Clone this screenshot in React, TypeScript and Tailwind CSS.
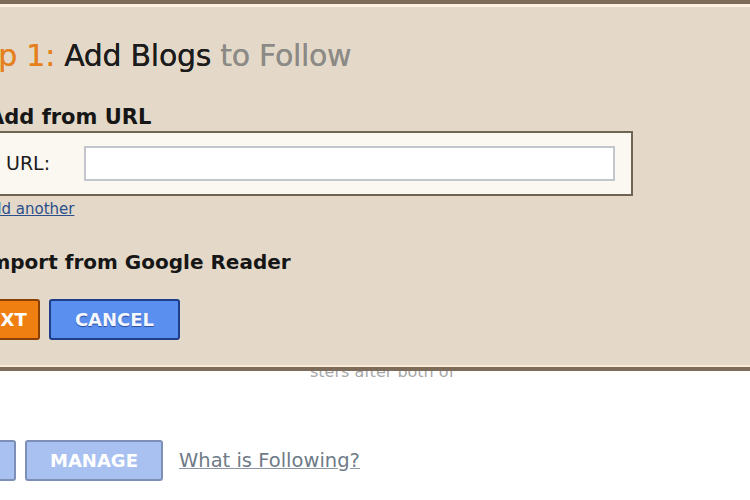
import React from 'react';

const font = { fontFamily: '"DejaVu Sans", Verdana, sans-serif' };

export default function App() {
  return (
    <div className="relative h-[500px] w-[750px] overflow-hidden bg-white" style={font}>
      {/* dialog panel */}
      <div className="flex h-[371px] flex-col border-t-4 border-b-4 border-[#7d6c5a] bg-[#e4d9c8]">
        <div className="h-[3px] bg-[#fbf1de]" />
        <div className="flex flex-1 flex-col">
          <h1 className="-ml-[50px] mt-[30px] text-[30px] leading-[38px] tracking-[-0.3px] text-[#1c1c1c] [text-shadow:0_0_0.6px_#1c1c1c]">
            <span className="text-[#e5801f] [text-shadow:0_0_0.6px_#e5801f]">Step 1:</span> Add Blogs{' '}
            <span className="text-[#8c8a86] [text-shadow:0_0_0.6px_#8c8a86]">to Follow</span>
          </h1>

          <h2 className="-ml-[12px] mt-[29px] text-[21px] font-bold leading-[26px] text-[#161616]">
            Add from URL
          </h2>

          <div className="-ml-[12px] mt-[1px] flex h-[65px] w-[645px] items-center border-2 border-[#6e6454] bg-[#fbf8f1] pl-[16px]">
            <label className="w-[78px] text-[19px] text-[#1c1c1c]">URL:</label>
            <input
              className="h-[35px] w-[531px] border-2 border-[#c3c6cc] bg-white outline-none"
              type="text"
            />
          </div>

          <a className="-ml-[18px] mt-[3px] text-[15px] leading-[20px] text-[#2b4f8c] underline">
            Add another
          </a>

          <h2 className="-ml-[18px] mt-[30px] text-[20px] font-bold leading-[26px] text-[#161616]">
            Import from Google Reader
          </h2>

          <div className="-ml-[40px] mt-[24px] flex gap-[9px]">
            <button className="h-[41px] w-[80px] rounded-[3px] border-2 border-[#8a3f06] bg-[#f07f12] text-[18px] font-bold text-white">
              NEXT
            </button>
            <button className="h-[41px] w-[131px] rounded-[3px] border-2 border-[#1d3e8a] bg-[#5a8ff0] text-[18px] font-bold text-[#f4f7ff] [text-shadow:0_1px_1px_#2a4f9a]">
              CANCEL
            </button>
          </div>
        </div>
        <div className="h-[2px] bg-[#f6ead6]" />
      </div>

      {/* page text peeking under the dialog */}
      <div className="h-[9px] overflow-hidden">
        <p className="-mt-[8px] ml-[310px] text-[16px] leading-[17px] text-[#a8a8a8]">
          sters after both of
        </p>
      </div>

      {/* page buttons */}
      <div className="-ml-[60px] mt-[60px] flex items-center gap-[9px]">
        <button className="h-[41px] w-[76px] rounded-[3px] border-2 border-[#7d8fb6] bg-[#a9c1f1] text-[18px] font-bold text-white">
          ADD
        </button>
        <button className="h-[41px] w-[138px] rounded-[3px] border-2 border-[#7d8fb6] bg-[#a9c1f1] text-[18px] font-bold text-white">
          MANAGE
        </button>
        <a className="ml-[7px] text-[19.5px] text-[#6f7b88] underline decoration-[#8b96a2]">
          What is Following?
        </a>
      </div>
    </div>
  );
}
